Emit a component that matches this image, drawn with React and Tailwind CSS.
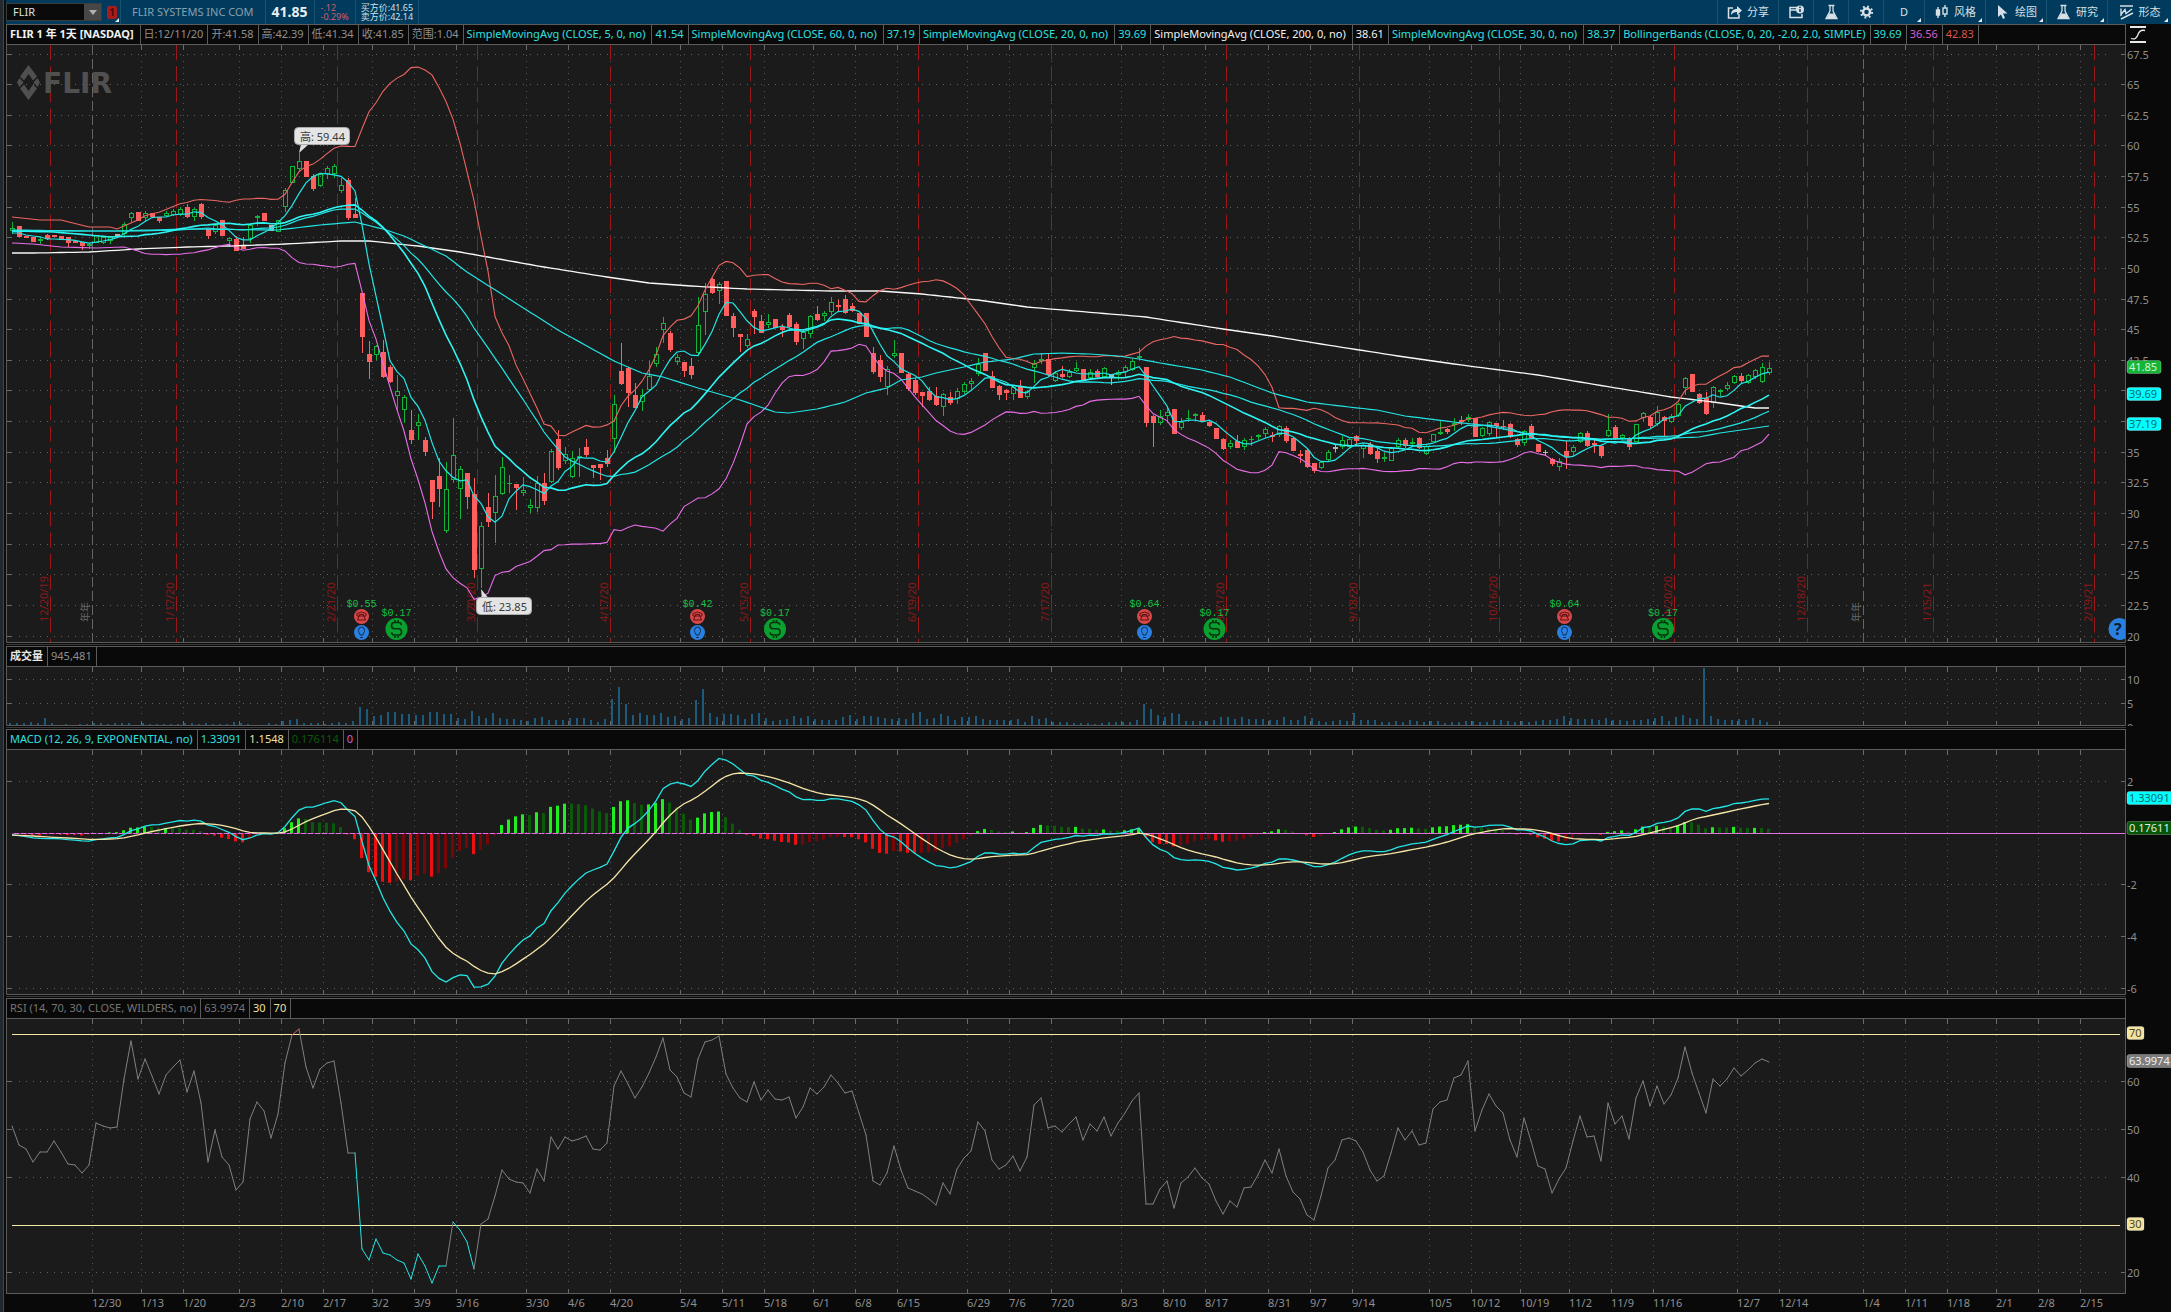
import React from "react";

const UP = "#12b53a";
const DOWN = "#ff5f5f";
const FLAT = "#b4b4b4";

const barX = (i) => 12 + 7 * i;
const priceToY = (p) => 54.5 + (67.5 - p) * 12.253;
const macdToY = (v) => 833.5 - v * 25.9;
const rsiToY = (v) => 1034.5 + (70 - v) * 4.775;

// direction (g up, r down, w unchanged), body top, body bottom, wick top, wick bottom
const candleText = `g 228 231 222 234|r 226 237|r 236 238|r 237 242|g 239 241 237 244|r 235 239 234 240|r 235 237|r 236 240|r 237 243 237 247|r 241 243
r 242 246 242 250|g 244 246 243 249|g 235 243|g 237 243 237 244|g 236 241 236 244|w 234 237|g 224 234 222 237|g 213 218 212 222|r 212 221|g 213 218 211 221
r 213 217|r 217 221 217 223|g 213 216 211 217|g 211 215 209 216|g 209 215 207 216|r 207 217 204 218|g 209 217 208 221|r 204 217 203 219|r 229 236 229 239|g 225 232 225 234
r 220 236|g 238 241 237 247|r 239 251 236 251|r 246 249 237 249|g 225 239 224 243|g 216 218 215 226|r 213 221|w 225 231|g 220 232|g 190 207 188 212
g 166 183|g 161 169 153 172|r 161 177|r 176 189 174 191|g 174 186 173 187|g 168 174 166 179|g 166 174 164 178|g 185 191 178 193|r 180 218 178 220|r 214 218 198 218
r 293 337 293 353|r 354 362 341 379|g 346 355 345 360|r 352 377 340 378|r 367 382 365 383|g 391 396 375 410|g 397 410 395 423|r 430 440 410 444|g 422 426 414 440|r 440 452 437 456
r 480 502 480 519|r 476 489 458 507|g 489 531 462 533|g 455 480 418 483|g 469 489 466 519|r 473 497 473 509|r 494 570 478 578|g 526 569 522 588|r 507 522 493 527|g 496 513 475 543
g 467 494 457 495|g 483 484 475 493|r 484 488 484 510|g 490 493 477 496|g 505 508 499 513|g 483 508 476 512|r 483 501 473 505|g 451 482 449 483|r 439 468 430 470|g 454 461 447 464
g 458 477 451 478|g 456 458 448 477|r 447 455 439 457|r 465 468 465 478|r 464 468 464 480|r 458 464 450 467|g 404 439 395 453|r 371 384 343 385|r 368 393 367 407|r 395 408 383 408
g 395 402 389 411|g 376 390 361 391|g 354 364 347 367|g 323 330 317 343|r 333 350 331 352|g 357 362 354 365|r 362 371 362 377|r 366 375 358 379|g 325 353 297 354|g 294 312 283 335
r 279 293 278 294|g 284 291 282 304|r 281 316|r 316 328 313 337|r 334 337 334 352|g 339 346 334 348|r 311 317 309 334|r 321 333 315 333|g 322 325 314 328|r 319 328
r 327 330 324 337|r 315 327 313 328|r 324 342 322 345|g 332 339 329 349|g 316 334 315 338|r 314 320 306 321|g 313 316 311 321|g 302 312 297 315|r 305 307 300 311|r 299 313 295 314
r 306 311 303 312|r 313 324|r 313 337|r 353 372 347 374|r 360 377 355 382|g 369 387 366 395|g 353 356 340 358|r 353 373|r 374 389 372 391|r 380 393 378 395
r 392 396 392 407|r 391 400 387 401|r 396 405 387 406|g 394 407 393 416|r 397 403 392 405|g 391 399 388 404|g 384 392 382 394|g 381 384 378 390|g 364 374 358 376|r 353 371
r 376 388 371 388|r 386 395 385 400|r 390 393 389 400|g 387 394 385 400|r 386 398 380 398|g 391 397 390 399|g 363 368 360 383|g 359 361 353 364|r 359 375 354 376|g 373 381 371 382
r 374 377 366 378|g 372 377 369 378|g 368 371 362 372|r 369 380|g 372 378 369 379|r 371 377 369 378|g 368 377 367 378|w 374 377 374 385|g 372 375 370 380|g 367 372 365 377
g 361 370 359 371|g 356 358 348 360|r 367 423 367 427|r 416 423 415 447|g 416 423 410 425|g 412 416 406 423|r 409 434|g 422 428 418 430|g 418 419 410 421|g 414 416 413 421
r 415 421 412 422|r 422 426 420 427|r 428 439|r 439 449 438 450|g 443 447 440 449|r 441 448 435 448|g 440 447 438 450|g 439 440 436 446|g 435 437 434 440|g 429 434 427 438
r 435 437 432 442|g 426 435 425 437|r 428 441 426 443|r 438 451|r 454 456 450 463|r 450 467 449 468|r 463 471 463 473|g 462 468 461 469|g 452 460 450 461|w 447 449 445 452
g 440 447 436 449|g 439 447 438 448|r 436 441 435 446|g 445 449 444 458|r 444 454 442 455|r 451 459 447 463|g 457 459 453 462|g 448 461|g 440 447 438 448|r 440 446 438 448
g 442 444 438 446|r 438 448 437 449|g 446 454 445 455|g 434 442|g 432 434 422 435|r 429 432 428 434|g 423 425 418 431|r 420 422 416 425|g 417 420 414 422|r 418 437
g 428 436 427 437|g 422 434 421 436|r 423 426 423 438|r 426 427 420 430|r 424 437 423 438|r 439 445 438 447|g 431 443 430 446|r 426 438 424 439|r 444 452|w 452 453 450 456
r 459 464 458 466|g 461 467 458 471|r 451 457 441 469|g 447 452 445 456|g 433 442 432 443|r 433 446 431 447|r 443 445 440 453|r 446 456 445 458|g 430 436 414 437|r 427 439 425 440
g 435 438 434 440|r 438 447 437 450|g 424 442|g 413 418 412 422|r 417 426 416 428|g 412 424 406 426|r 417 421 416 436|g 416 422 414 423|g 404 416 403 417|g 378 388 377 395
r 374 392|r 394 403 393 404|r 398 414 392 415|g 387 403 386 408|g 390 392 389 396|g 385 389 382 390|g 376 383 375 384|r 376 381 373 384|g 375 383 374 384|g 370 377 369 379
g 367 382 363 383|g 368 373 362 375`;

const candles = candleText.split(/[|\n]/).map((row) => {
  const [dir, top, bottom, high = top, low = bottom] = row.trim().split(" ");
  return { dir, top: +top, bottom: +bottom, high: +high, low: +low };
});

const closes = candles.map((c) => (c.dir === "g" ? c.top : c.bottom));

const volumes = [
  2, 2, 2, 3, 2, 7, 2, 0, 1, 0, 1, 1, 2, 2, 1, 2, 2, 2, 0, 2, 1, 1, 1, 1, 1, 2, 2, 1, 2, 1, 1, 1, 3, 2, 1, 0, 0, 2, 1, 4,
  5, 6, 2, 2, 2, 1, 2, 3, 2, 4, 18, 16, 9, 10, 13, 13, 11, 11, 10, 10, 13, 13, 11, 11, 7, 6, 14, 9, 7, 12, 7, 6, 6, 5, 4,
  7, 8, 5, 5, 5, 7, 7, 7, 5, 3, 6, 26, 38, 21, 10, 12, 10, 10, 12, 8, 9, 6, 7, 25, 36, 12, 8, 11, 11, 10, 6, 11, 12, 7, 4,
  5, 6, 9, 7, 9, 6, 5, 5, 5, 8, 10, 6, 9, 9, 8, 7, 6, 7, 6, 12, 13, 6, 7, 11, 9, 5, 8, 8, 9, 6, 5, 5, 5, 5, 6, 3, 9, 6, 7,
  3, 3, 3, 2, 2, 2, 1, 2, 3, 3, 3, 3, 5, 21, 16, 10, 8, 12, 11, 4, 4, 4, 4, 5, 8, 8, 6, 8, 6, 6, 6, 5, 5, 8, 5, 5, 9, 7,
  4, 3, 4, 5, 4, 12, 5, 5, 5, 3, 3, 4, 3, 5, 4, 3, 4, 4, 2, 3, 3, 4, 4, 3, 3, 5, 5, 4, 3, 4, 3, 4, 5, 5, 6, 9, 7, 6, 6,
  6, 5, 7, 5, 5, 4, 5, 5, 6, 7, 9, 4, 8, 10, 7, 6, 57, 9, 6, 5, 5, 6, 5, 7, 5, 3,
];

const rsi = [
  1126, 1145, 1149, 1162, 1152, 1152, 1141, 1152, 1164, 1165, 1173, 1165, 1123, 1126, 1128, 1127, 1079, 1041, 1079, 1059,
  1076, 1094, 1075, 1067, 1060, 1092, 1071, 1103, 1162, 1130, 1157, 1165, 1190, 1182, 1119, 1102, 1111, 1138, 1114, 1063,
  1035, 1029, 1067, 1088, 1069, 1063, 1061, 1103, 1153, 1153, 1249, 1260, 1239, 1253, 1255, 1260, 1263, 1279, 1254, 1266,
  1283, 1266, 1266, 1222, 1230, 1242, 1269, 1224, 1219, 1196, 1170, 1179, 1182, 1183, 1193, 1169, 1181, 1137, 1149, 1137,
  1141, 1139, 1136, 1149, 1150, 1143, 1086, 1071, 1084, 1098, 1087, 1073, 1057, 1038, 1070, 1077, 1093, 1097, 1059, 1042,
  1040, 1036, 1074, 1088, 1098, 1102, 1082, 1100, 1090, 1099, 1100, 1097, 1118, 1107, 1088, 1094, 1087, 1075, 1083, 1093,
  1091, 1113, 1135, 1181, 1185, 1173, 1146, 1170, 1188, 1191, 1194, 1199, 1205, 1183, 1194, 1169, 1158, 1151, 1122, 1131,
  1160, 1169, 1165, 1156, 1171, 1157, 1105, 1098, 1128, 1126, 1132, 1124, 1117, 1140, 1124, 1131, 1117, 1136, 1123, 1113,
  1101, 1093, 1204, 1204, 1189, 1181, 1208, 1183, 1177, 1168, 1178, 1184, 1201, 1214, 1201, 1207, 1188, 1187, 1175, 1160,
  1173, 1149, 1176, 1192, 1199, 1215, 1220, 1196, 1168, 1160, 1140, 1138, 1141, 1152, 1170, 1181, 1176, 1153, 1128, 1140,
  1131, 1145, 1143, 1109, 1102, 1100, 1078, 1075, 1061, 1131, 1110, 1094, 1106, 1113, 1140, 1157, 1118, 1141, 1166, 1169,
  1193, 1179, 1168, 1141, 1116, 1137, 1136, 1161, 1103, 1124, 1116, 1139, 1098, 1081, 1106, 1086, 1104, 1095, 1078, 1047,
  1073, 1093, 1113, 1079, 1086, 1079, 1068, 1076, 1070, 1063, 1059, 1062,
];

const sma60 = [
  [0, 231], [15, 231], [25, 229], [38, 230], [44, 225], [49, 222], [53, 229], [56, 236], [62, 256], [65, 272], [78, 330],
  [86, 361], [90, 373], [93, 377], [98, 388], [104, 400], [109, 412], [111, 413], [115, 409], [119, 402], [122, 393],
  [125, 388], [127, 380], [130, 377], [132, 373], [136, 367], [139, 362], [143, 359], [146, 354], [150, 353], [154, 354],
  [158, 356], [161, 359], [164, 363], [170, 370], [174, 377], [180, 393], [185, 402], [191, 407], [195, 410], [199, 416],
  [206, 422], [210, 425], [216, 433], [221, 437], [227, 439], [237, 438], [241, 437], [244, 433], [247, 430], [251, 426],
];

const sma200 = [
  [0, 253], [3, 253], [11, 252], [18, 249], [25, 247], [31, 246], [39, 244], [47, 241], [51, 241], [58, 246], [64, 252],
  [68, 257], [76, 267], [85, 277], [91, 283], [97, 286], [105, 289], [117, 291], [124, 291], [130, 294], [138, 300],
  [145, 307], [162, 317], [173, 329], [180, 336], [187, 344], [198, 356], [206, 364], [218, 375], [224, 382], [237, 397],
  [243, 402], [249, 408], [251, 408],
];

// linear fill between sparse [bar, y] pairs
const fill = (pairs) => {
  const out = [];
  for (let k = 0; k < pairs.length - 1; k++) {
    const [a, ya] = pairs[k];
    const [b, yb] = pairs[k + 1];
    for (let i = a; i < b; i++) out.push(ya + ((yb - ya) * (i - a)) / (b - a));
  }
  out.push(pairs[pairs.length - 1][1]);
  return out;
};

const sma = (n, lead) => {
  const out = lead.slice(0, n - 1);
  for (let i = n - 1; i < closes.length; i++) {
    out.push(closes.slice(i - n + 1, i + 1).reduce((a, b) => a + b, 0) / n);
  }
  return out;
};

const sma5 = sma(5, [233, 233, 235, 236]);
const sma20 = sma(20, fill([[0, 231], [6, 232], [11, 235], [14, 237], [18, 236]]));
const sma30 = sma(30, fill([[0, 230], [11, 231], [18, 231], [24, 230], [28, 228]]));

const deviation = (i) => {
  const part = closes.slice(i - 19, i + 1);
  return Math.sqrt(part.reduce((a, v) => a + (v - sma20[i]) ** 2, 0) / 20);
};
const upperLead = fill([[0, 217], [4, 220], [7, 220], [11, 227], [14, 227], [15, 229], [18, 220]]);
const lowerLead = fill([[0, 243], [3, 244], [7, 247], [12, 248], [16, 247], [18, 251]]);
const upperBand = sma20.map((m, i) => (i < 19 ? upperLead[i] : m - 2 * deviation(i)));
const lowerBand = sma20.map((m, i) => (i < 19 ? lowerLead[i] : m + 2 * deviation(i)));

const macdRows = [];
let fast = 53.05;
let slow = 53.13;
let signal = -0.07;
closes.forEach((y) => {
  const p = 67.5 - (y - 54.5) / 12.253;
  fast += ((p - fast) * 2) / 13;
  slow += ((p - slow) * 2) / 27;
  signal += ((fast - slow - signal) * 2) / 10;
  macdRows.push({ macd: fast - slow, signal, diff: fast - slow - signal });
});

const histColor = (i) => {
  const now = macdRows[i].diff;
  const before = i ? macdRows[i - 1].diff : now;
  if (now >= 0) return now > before ? "#1fef1f" : "#0a5a0a";
  return now < before ? "#ee1010" : "#780606";
};

const weeks = [
  [18, "1/13"], [24, "1/20"], [32, "2/3"], [38, "2/10"], [44, "2/17"], [51, "3/2"], [57, "3/9"], [63, "3/16"], [73, "3/30"],
  [79, "4/6"], [85, "4/20"], [95, "5/4"], [101, "5/11"], [107, "5/18"], [114, "6/1"], [120, "6/8"], [126, "6/15"],
  [136, "6/29"], [142, "7/6"], [148, "7/20"], [158, "8/3"], [164, "8/10"], [170, "8/17"], [179, "8/31"], [185, "9/7"],
  [191, "9/14"], [202, "10/5"], [208, "10/12"], [215, "10/19"], [222, "11/2"], [228, "11/9"], [234, "11/16"], [246, "12/7"],
  [252, "12/14"], [270, "1/11"], [276, "1/18"], [283, "2/1"], [289, "2/8"], [295, "2/15"],
];
const years = [[11, "12/30"], [264, "1/4"]];
const weekX = (k) => 15.5 + 7 * k;

const expirations = [
  [50.5, "12/20/19"], [176.5, "1/17/20"], [337.5, "2/21/20"], [477.5, "3/20/20"], [610.5, "4/17/20"], [750.5, "5/15/20"],
  [918.5, "6/19/20"], [1051.5, "7/17/20"], [1226.5, "8/21/20"], [1359.5, "9/18/20"], [1499.5, "10/16/20"],
  [1674.5, "11/20/20"], [1807.5, "12/18/20"], [1933.5, "1/15/21"], [2094.5, "2/19/21"],
];

const earnings = [[361.5, "$0.55"], [697.5, "$0.42"], [1144.5, "$0.64"], [1564.5, "$0.64"]];
const dividends = [[396.5, "$0.17"], [775, "$0.17"], [1214.5, "$0.17"], [1663, "$0.17"]];

const Line = ({ values, color, width = 1 }) => (
  <polyline
    points={values.map((y, i) => `${barX(i)},${y.toFixed(1)}`).join(" ")}
    fill="none"
    stroke={color}
    strokeWidth={width}
  />
);

const Chart = ({ label, top, bottom, end = bottom + 1, ticks, children }) => (
  <svg
    role="img"
    aria-label={label}
    viewBox={`6 ${top} 2165 ${end - top}`}
    className="block w-full h-auto text-[11px]"
  >
    <rect x="6" y={top} width="2120" height={bottom - top} fill="#1b1b1b" />
    <g stroke="#626262" strokeDasharray="1 6">
      {ticks.map(([y]) => (
        <line key={y} x1="19" x2="2112" y1={y} y2={y} />
      ))}
    </g>
    <g stroke="#565656" strokeDasharray="1 5">
      {weeks.map(([k]) => (
        <line key={k} x1={weekX(k)} x2={weekX(k)} y1={top + 10} y2={bottom - 6} />
      ))}
      {top !== 45 &&
        years.map(([k]) => (
          <line key={k} x1={weekX(k)} x2={weekX(k)} y1={top + 10} y2={bottom - 6} />
        ))}
    </g>
    <g stroke="#6a6a6a">
      {[...weeks, ...years].map(([k]) => (
        <path key={k} d={`M${weekX(k)} ${top}v5M${weekX(k)} ${bottom}v-4`} />
      ))}
      {ticks.map(([y]) => (
        <path key={y} d={`M7 ${y}h5M2125 ${y}h-4`} />
      ))}
    </g>
    {children}
    <path
      d={`M6.5 ${top}V${bottom + 0.5}H2125.5V${top}`}
      fill="none"
      stroke="#5c5c5c"
    />
  </svg>
);

const AxisLabels = ({ ticks }) => (
  <g fill="#8f8f8f">
    {ticks.map(([y, text]) => (
      <text key={y} x="2127" y={y + 4.5}>
        {text}
      </text>
    ))}
  </g>
);

const Tag = ({ y, width, fill, color, children }) => (
  <g>
    <rect x="2127" y={y - 6.5} width={width} height="13" rx="2.5" fill={fill} stroke="#ffffff" strokeOpacity="0.25" />
    <text x="2129" y={y + 4} fill={color}>
      {children}
    </text>
  </g>
);

const Header = ({ cells, children }) => (
  <div className="flex h-[21px] text-[11px] leading-[18px]">
    <div className="flex min-w-0 flex-1 overflow-hidden whitespace-nowrap border border-[#5c5c5c] bg-[#090909]">
      {cells.map(([text, style, pad = "pr-1"]) => (
        <span key={text} className={"shrink-0 border-r border-[#5c5c5c] pl-[3px] " + pad + " " + style}>
          {text}
        </span>
      ))}
    </div>
    <div className="w-[45px] shrink-0">{children}</div>
  </div>
);

const Divider = () => (
  <div className="flex h-[3px] items-center pr-[45px]">
    <div className="h-px flex-1 bg-[#3a3a3a]" />
  </div>
);

const cyan = "text-[#2fe0e0]";
const priceCells = [
  ["FLIR 1 年 1天 [NASDAQ]", "font-bold text-[#f2f2f2]", "pr-1.5"],
  ["日:12/11/20", "text-[#8f8f8f]"],
  ["开:41.58", "text-[#8f8f8f]"],
  ["高:42.39", "text-[#8f8f8f]"],
  ["低:41.34", "text-[#8f8f8f]"],
  ["收:41.85", "text-[#8f8f8f]"],
  ["范围:1.04", "text-[#8f8f8f]"],
  ["SimpleMovingAvg (CLOSE, 5, 0, no)", cyan, "pr-1.5"],
  ["41.54", cyan],
  ["SimpleMovingAvg (CLOSE, 60, 0, no)", cyan, "pr-1.5"],
  ["37.19", cyan],
  ["SimpleMovingAvg (CLOSE, 20, 0, no)", cyan, "pr-1.5"],
  ["39.69", cyan],
  ["SimpleMovingAvg (CLOSE, 200, 0, no)", "text-[#f2f2f2]", "pr-1.5"],
  ["38.61", "text-[#f2f2f2]"],
  ["SimpleMovingAvg (CLOSE, 30, 0, no)", cyan, "pr-1.5"],
  ["38.37", cyan],
  ["BollingerBands (CLOSE, 0, 20, -2.0, 2.0, SIMPLE)", cyan],
  ["39.69 ", cyan],
  ["36.56", "text-[#d25fd2]"],
  ["42.83", "text-[#d9534f]"],
];

const PriceChart = () => {
  const ticks = [];
  for (let p = 67.5; p >= 20; p -= 2.5) {
    ticks.push([Math.round(priceToY(p)) - 0.5, String(p)]);
  }
  // levels taken by a price tag get no label of their own
  const labels = ticks.filter(([, text]) => text !== "40" && text !== "37.5");
  return (
    <Chart label="FLIR price" top={45} bottom={642} ticks={ticks}>
      <g stroke="#9c1818" strokeDasharray="15 6.2">
        {expirations.map(([x]) => (
          <line key={x} x1={x} x2={x} y1="45" y2="642" />
        ))}
      </g>
      <g stroke="#666666" strokeDasharray="10 4">
        {years.map(([k]) => (
          <line key={k} x1={weekX(k)} x2={weekX(k)} y1="45" y2="642" />
        ))}
      </g>
      <g fill="#8a1818">
        {expirations.map(([x, text]) => (
          <text key={x} transform={`translate(${x - 3} 622) rotate(-90)`}>
            {text}
          </text>
        ))}
      </g>
      <g fill="#666666" fontSize="10">
        {years.map(([k]) => (
          <text key={k} transform={`translate(${weekX(k) - 4} 622) rotate(-90)`}>
            年年
          </text>
        ))}
      </g>

      <g fill="#505050">
        <path
          fillRule="evenodd"
          d="M28.5 65l8.500 11.500-4 4-4.500-6.500-4.500 6.500-4-4zM28.500 100l8.500-11.500-4-4-4.500 6.500-4.500-6.500-4 4z"
        />
        <path d="M17 82.500l2.500-4.500 4 4.500-4 4.500zM40 82.500l-2.500-4.500-4 4.500 4 4.500z" />
        <text x="43" y="93" fontSize="28" fontWeight="700" fontFamily="DejaVu Sans, sans-serif">
          FLIR
        </text>
      </g>

      {candles.map((c, i) => {
        const color = c.dir === "g" ? UP : c.dir === "r" ? DOWN : FLAT;
        const x = barX(i) + 0.5;
        const height = Math.max(c.bottom - c.top, 1);
        return (
          <g key={i} stroke={color}>
            <path d={`M${x} ${c.high}V${c.top}M${x} ${c.bottom}V${c.low}`} />
            {c.dir === "g" && height > 2 ? (
              <rect x={x - 2} y={c.top + 0.5} width="4" height={height - 1} fill="none" />
            ) : (
              <rect x={x - 2.5} y={c.top} width="5" height={height} fill={color} stroke="none" />
            )}
          </g>
        );
      })}

      <Line values={fill(sma200)} color="#f8f8f8" width={1.3} />
      <Line values={upperBand} color="#ea6662" width={1.1} />
      <Line values={lowerBand} color="#e86ee8" width={1.1} />
      <Line values={fill(sma60)} color="#22e6e6" width={1.2} />
      <Line values={sma30} color="#22e6e6" width={1.2} />
      <Line values={sma20} color="#2ef6f4" width={1.6} />
      <Line values={sma5} color="#22e6e6" width={1.2} />

      <path d="M301 144h8l-10 9z" fill="#dedede" />
      <rect x="294.500" y="127.500" width="55" height="17" rx="4" fill="#e4e4e4" stroke="#ababab" />
      <text x="300" y="141" fill="#3a3a3a">高: 59.44</text>
      <path d="M482 600h8l-9-11z" fill="#dedede" />
      <rect x="476.500" y="597.500" width="55" height="17" rx="4" fill="#e4e4e4" stroke="#ababab" />
      <text x="482" y="611" fill="#3a3a3a">低: 23.85</text>

      {earnings.map(([x, text]) => (
        <g key={x}>
          <text x={x} y="607" textAnchor="middle" fill="#16c044" fontSize="10" fontFamily="Liberation Mono, monospace">
            {text}
          </text>
          <circle cx={x} cy="616.500" r="7.500" fill="#d84848" />
          <path
            d={`M${x - 4.5} 616v-2.500q4.500-3 9 0v2.500h-2.500v-1.500h-4v1.500zM${x - 2.5} 616h5l1.500 4h-8z`}
            fill="none"
            stroke="#5a1010"
          />
          <circle cx={x} cy="632.500" r="7.500" fill="#2a80e0" />
          <path
            d={`M${x - 1.5} 635c0-2-1.500-2.500-1.500-4.500a3 3.500 0 0 1 6 0c0 2-1.500 2.500-1.500 4.500zM${x - 1.5} 637.500h3`}
            fill="none"
            stroke="#0d2c55"
          />
        </g>
      ))}
      {dividends.map(([x, text]) => (
        <g key={x}>
          <text x={x} y="616" textAnchor="middle" fill="#16c044" fontSize="10" fontFamily="Liberation Mono, monospace">
            {text}
          </text>
          <circle cx={x} cy="629" r="11" fill="#0aa030" />
          <path
            d={`M${x + 5} 625q-.500-2.500-3-2.500h-4q-3 0-3 3t3 3.300h4q3 0 3 3.200t-3 3h-4q-2.500 0-3-2.500M${x - 1.500} 622v-2M${x + 1.500} 622v-2M${x - 1.500} 638v-2M${x + 1.500} 638v-2`}
            fill="none"
            stroke="#06330f"
            strokeWidth="1.600"
          />
        </g>
      ))}
      <path d="M2125 619.500a11 11 0 1 0 0 19z" fill="#2a80e0" />
      <text x="2114" y="635" fill="#0b1d33" fontSize="16" fontWeight="bold">?</text>
      <AxisLabels ticks={labels} />
      <Tag y={367} width={34} fill="#15b53a" color="#d5f5d5">41.85</Tag>
      <Tag y={394} width={34} fill="#00ffff" color="#0b6b6b">39.69</Tag>
      <Tag y={424} width={34} fill="#00ffff" color="#0b6b6b">37.19</Tag>
    </Chart>
  );
};

const VolumeChart = () => {
  const ticks = [
    [679.5, "10"],
    [703.5, "5"],
  ];
  return (
    <Chart label="Volume" top={667} bottom={725} ticks={ticks}>
      <g fill="#1d5b7c">
        {volumes.map((h, i) => (
          <rect key={i} x={barX(i) - 3} y={725 - h} width="2" height={h} />
        ))}
      </g>
      <AxisLabels ticks={[...ticks, [727.5, "0"]]} />
    </Chart>
  );
};

const MacdChart = () => {
  const ticks = [2, -2, -4, -6].map((v) => [Math.round(macdToY(v)) - 0.5, String(v)]);
  return (
    <Chart label="MACD" top={750} bottom={994} ticks={ticks}>
      {macdRows.map(({ diff }, i) => {
        const y = macdToY(diff);
        return (
          <rect
            key={i}
            x={barX(i) - 2}
            y={Math.min(y, 833.5)}
            width="3"
            height={Math.abs(y - 833.5)}
            fill={histColor(i)}
          />
        );
      })}
      <line x1="12" x2="2125" y1="833.500" y2="833.500" stroke="#e070e0" />
      <line x1="12" x2="740" y1="833.500" y2="833.500" stroke="#8a2a8a" strokeDasharray="2 5" />
      <Line values={macdRows.map((r) => macdToY(r.macd))} color="#22e6e6" width={1.3} />
      <Line values={macdRows.map((r) => macdToY(r.signal))} color="#f5e6a8" width={1.3} />
      <AxisLabels ticks={ticks} />
      <Tag y={798} width={48} fill="#00ffff" color="#0b6b6b">1.33091</Tag>
      <Tag y={828} width={48} fill="#075507" color="#e0f0e0">0.17611</Tag>
    </Chart>
  );
};

const rsiColor = (i) => {
  if (i === 40) return "#e0605c";
  if ((i >= 49 && i < 62) || (i >= 63 && i < 66)) return "#22e6e6";
  return "#808080";
};

const RsiChart = () => {
  const ticks = [60, 50, 40, 20].map((v) => [Math.round(rsiToY(v)) - 0.5, String(v)]);
  return (
    <Chart label="RSI" top={1019} bottom={1293} end={1312} ticks={ticks}>
      <path d="M12 1034.500H2120M12 1225.500H2120" stroke="#f5e9a8" strokeWidth="1.200" />
      {rsi.slice(1).map((y, i) => (
        <line
          key={i}
          x1={barX(i)}
          y1={rsi[i]}
          x2={barX(i + 1)}
          y2={y}
          stroke={rsiColor(i)}
          strokeLinecap="round"
        />
      ))}
      <AxisLabels ticks={ticks} />
      <Tag y={1033} width={17} fill="#f3e3a0" color="#4a4423">70</Tag>
      <Tag y={1061} width={48} fill="#7c7c7c" color="#f0f0f0">63.9974</Tag>
      <Tag y={1224} width={17} fill="#f3e3a0" color="#4a4423">30</Tag>
      <g fill="#8f8f8f">
        {[...years, ...weeks].map(([k, text]) => (
          <text key={k} x={weekX(k) - 0.5} y="1307">
            {text}
          </text>
        ))}
      </g>
    </Chart>
  );
};

const icons = {
  share: (
    <g>
      <path d="M6 4H1.500v10H12v-4" fill="none" stroke="currentColor" strokeWidth="1.500" />
      <path d="M4 11c0-4 2-6 6-6V2l5 4.500-5 4.500V8C7 8 5.500 9 4 11z" fill="currentColor" />
    </g>
  ),
  info: (
    <g>
      <path d="M8 3.500H1v10h12V10M1 6h7" fill="none" stroke="currentColor" strokeWidth="1.500" />
      <circle cx="11" cy="5.500" r="4" fill="currentColor" />
      <path d="M11 5v3M11 2.500v1.500" stroke="#003a5c" strokeWidth="1.500" />
    </g>
  ),
  flask: (
    <g>
      <path d="M4.500 1.500h6M6 2v5l-4 7.500h11L9 7V2" fill="none" stroke="currentColor" strokeWidth="1.300" />
      <path d="M5 9.500h5l2.500 5h-10z" fill="currentColor" />
    </g>
  ),
  gear: (
    <g fill="none" stroke="currentColor">
      <circle cx="7.500" cy="8" r="3.500" strokeWidth="2.500" />
      <circle cx="7.500" cy="8" r="5.500" strokeWidth="2.200" strokeDasharray="1.800 2.520" />
    </g>
  ),
  candles: (
    <g stroke="currentColor" strokeWidth="1.400">
      <path d="M4 3v11M11 1v12" />
      <rect x="2.500" y="6" width="3" height="5" fill="currentColor" />
      <rect x="9" y="4" width="4" height="6" fill="#003a5c" />
    </g>
  ),
  cursor: <path d="M3 1v12l3-2.500 2 4.500 2-1-2-4.500h4.500z" fill="currentColor" />,
  pattern: (
    <path
      d="M1 2h13M2 15l12-6M2 4.500v6l4-5 1 4 6-4.500M2 12V5"
      fill="none"
      stroke="currentColor"
      strokeWidth="1.400"
    />
  ),
};

const ToolButton = ({ icon, label, text, width, menu }) => (
  <button
    type="button"
    aria-label={label}
    className={"relative flex h-full items-center justify-center gap-[5px] border-l border-[#1b506f] " + width}
  >
    {icon && (
      <svg viewBox="0 0 15 16" className="h-4 w-[15px]">
        {icons[icon]}
      </svg>
    )}
    {text && <span>{text}</span>}
    {menu && (
      <span className="absolute bottom-0.5 right-[3px] border-b-4 border-l-4 border-b-[#e6eef2] border-l-transparent" />
    )}
  </button>
);

const Toolbar = () => (
  <div className="flex h-6 items-center bg-[#003a5c] text-[11px] text-[#d6e0e6]">
    <div className="flex h-[18px] w-24 border border-[#3b3b3b] bg-[#0a0a0a]">
      <input
        aria-label="Symbol"
        defaultValue="FLIR"
        className="min-w-0 flex-1 bg-transparent pl-[6px] text-[11px] text-[#d6e0e6] outline-none"
      />
      <button type="button" aria-label="Symbol list" className="flex w-[17px] items-center justify-center bg-[#474747]">
        <span className="border-x-4 border-t-[5px] border-x-transparent border-t-[#b0b0b0]" />
      </button>
    </div>
    <button
      type="button"
      className="relative ml-[5px] h-full w-[13px] pr-[3px] text-[10px] font-bold leading-[13px] text-[#4d0a0a]"
    >
      <span className="block rounded-xs bg-[#a81c1c]">1</span>
      <span className="absolute bottom-0.5 right-px border-b-4 border-l-4 border-b-[#e6eef2] border-l-transparent" />
    </button>
    <div className="flex h-full items-center border-x border-[#1b506f] px-[11px] text-[#8ba0ad]">
      FLIR SYSTEMS INC COM
    </div>
    <div className="flex h-full items-center border-r border-[#1b506f] px-[6px] text-sm font-bold text-[#e8eef2]">
      41.85
    </div>
    <div className="h-full border-r border-[#1b506f] px-[6px] pt-[3px] text-[9px] leading-[9px] text-[#d0606a]">
      <div>-.12</div>
      <div>-0.29%</div>
    </div>
    <div className="h-full border-r border-[#1b506f] px-[5px] pt-[3px] text-[9px] leading-[9px]">
      <div>买方价:41.65</div>
      <div>卖方价:42.14</div>
    </div>
    <div className="ml-auto flex h-full">
      <ToolButton icon="share" text="分享" width="w-[61px]" />
      <ToolButton icon="info" label="Info" width="w-[35px]" />
      <ToolButton icon="flask" label="Studies" width="w-[35px]" />
      <ToolButton icon="gear" label="Settings" width="w-[35px]" />
      <ToolButton text="D" width="w-[41px]" menu />
      <ToolButton icon="candles" text="风格" width="w-[61px]" menu />
      <ToolButton icon="cursor" text="绘图" width="w-[61px]" menu />
      <ToolButton icon="flask" text="研究" width="w-[61px]" menu />
      <ToolButton icon="pattern" text="形态" width="w-[64px]" menu />
    </div>
  </div>
);

const App = () => {
  return (
    <div className="flex bg-[#090909] font-['Noto_Sans','Noto_Sans_CJK_SC',sans-serif]">
      <div className="w-[6px] shrink-0 border-r-2 border-[#0c0c0c] bg-[#22292e]">
        <div className="ml-auto h-full w-px bg-[#1f506f]" />
      </div>
      <main className="min-w-0 flex-1">
        <Toolbar />
        <Header cells={priceCells}>
          <button type="button" aria-label="Scale" className="ml-1 mt-0.5 block">
            <svg viewBox="0 0 16 17" className="h-[17px] w-4" fill="none" stroke="#e8e8e8">
              <path d="M0 1h16M0 16h16" strokeWidth="2" />
              <path d="M1 12.500c4 1.500 6-1 7-4s3-5 7-4" strokeWidth="1.300" />
            </svg>
          </button>
        </Header>
        <PriceChart />
        <Divider />
        <Header
          cells={[
            ["成交量", "font-bold text-[#e8e8e8]"],
            ["945,481", "text-[#8f8f8f]"],
          ]}
        />
        <VolumeChart />
        <Divider />
        <Header
          cells={[
            ["MACD (12, 26, 9, EXPONENTIAL, no)", cyan],
            ["1.33091", cyan],
            ["1.1548", "text-[#f0e0a0]"],
            ["0.176114", "text-[#0b5a0b]"],
            ["0", "text-[#d25fd2]"],
          ]}
        />
        <MacdChart />
        <Divider />
        <Header
          cells={[
            ["RSI (14, 70, 30, CLOSE, WILDERS, no)", "text-[#767676]"],
            ["63.9974", "text-[#767676]"],
            ["30", "text-[#f0e0a0]"],
            ["70", "text-[#f0e0a0]"],
          ]}
        />
        <RsiChart />
      </main>
    </div>
  );
};

export default App;
